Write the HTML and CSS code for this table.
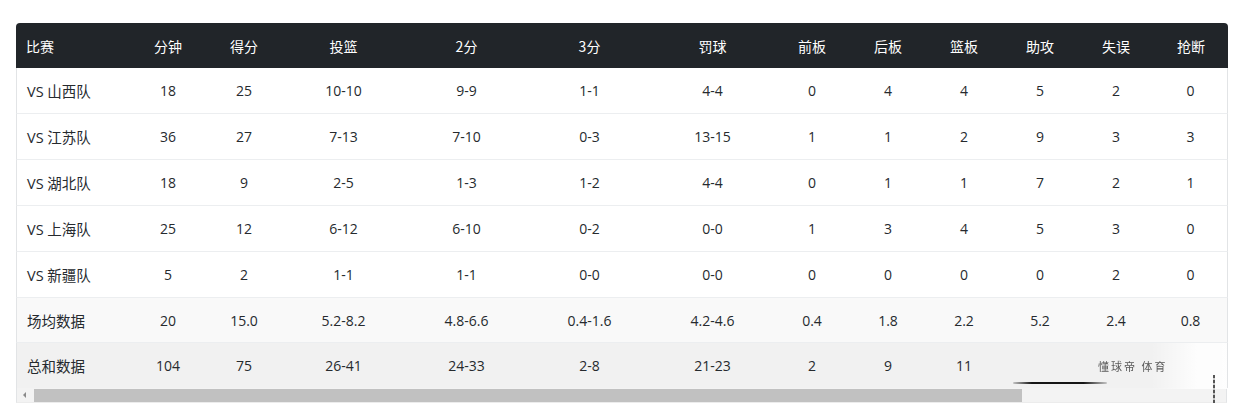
FILE: index.html
```html
<!DOCTYPE html>
<html lang="zh-CN">
<head>
<meta charset="utf-8">
<title>数据</title>
<link rel="stylesheet" href="styles.css">
</head>
<body>
<div class="wrap">
  <table class="stats">
    <colgroup>
      <col class="c-name"><col class="c-s"><col class="c-s"><col class="c-l"><col class="c-l"><col class="c-l"><col class="c-l">
      <col class="c-s"><col class="c-s"><col class="c-s"><col class="c-s"><col class="c-s"><col class="c-e">
    </colgroup>
    <thead>
      <tr>
        <th class="name">比赛</th><th>分钟</th><th>得分</th><th>投篮</th><th>2分</th><th>3分</th><th>罚球</th><th>前板</th><th>后板</th><th>篮板</th><th>助攻</th><th>失误</th><th>抢断</th>
      </tr>
    </thead>
    <tbody>
      <tr><td class="name">VS 山西队</td><td>18</td><td>25</td><td>10-10</td><td>9-9</td><td>1-1</td><td>4-4</td><td>0</td><td>4</td><td>4</td><td>5</td><td>2</td><td>0</td></tr>
      <tr><td class="name">VS 江苏队</td><td>36</td><td>27</td><td>7-13</td><td>7-10</td><td>0-3</td><td>13-15</td><td>1</td><td>1</td><td>2</td><td>9</td><td>3</td><td>3</td></tr>
      <tr><td class="name">VS 湖北队</td><td>18</td><td>9</td><td>2-5</td><td>1-3</td><td>1-2</td><td>4-4</td><td>0</td><td>1</td><td>1</td><td>7</td><td>2</td><td>1</td></tr>
      <tr><td class="name">VS 上海队</td><td>25</td><td>12</td><td>6-12</td><td>6-10</td><td>0-2</td><td>0-0</td><td>1</td><td>3</td><td>4</td><td>5</td><td>3</td><td>0</td></tr>
      <tr><td class="name">VS 新疆队</td><td>5</td><td>2</td><td>1-1</td><td>1-1</td><td>0-0</td><td>0-0</td><td>0</td><td>0</td><td>0</td><td>0</td><td>2</td><td>0</td></tr>
      <tr class="avg"><td class="name">场均数据</td><td>20</td><td>15.0</td><td>5.2-8.2</td><td>4.8-6.6</td><td>0.4-1.6</td><td>4.2-4.6</td><td>0.4</td><td>1.8</td><td>2.2</td><td>5.2</td><td>2.4</td><td>0.8</td></tr>
      <tr class="sum"><td class="name">总和数据</td><td>104</td><td>75</td><td>26-41</td><td>24-33</td><td>2-8</td><td>21-23</td><td>2</td><td>9</td><td>11</td><td></td><td></td><td></td></tr>
    </tbody>
  </table>
  <div class="scrollbar">
    <span class="arrow"></span>
    <div class="thumb"></div>
  </div>
  <div class="wm">
    <div class="wm-fade"></div>
    <span class="wm-text">懂球帝 体育</span>
    <div class="wm-line"></div>
    <div class="wm-mark"></div>
  </div>
</div>
</body>
</html>
```

FILE: styles.css
```css
html, body {
  margin: 0;
  padding: 0;
  background: #ffffff;
}

body {
  font-family: "Open Sans", "Noto Sans CJK SC", sans-serif;
  color: #262a2e;
}

.wrap {
  position: relative;
  margin: 23px 0 0 16px;
  width: 1211px;
}

.stats {
  width: 1211px;
  table-layout: fixed;
  border-collapse: separate;
  border-spacing: 0;
  font-size: 14px;
}

.c-name { width: 114px; }
.c-s { width: 76px; }
.c-l { width: 123px; }
.c-e { width: 74px; }

.stats th {
  background: #212529;
  color: #ffffff;
  font-weight: 400;
  font-size: 14px;
  height: 45px;
  padding: 0;
  text-align: center;
  font-family: "Noto Sans CJK SC", sans-serif;
}

.stats th:first-child { border-top-left-radius: 4px; }
.stats th:last-child { border-top-right-radius: 4px; }

.stats td {
  height: 45px;
  padding: 0;
  text-align: center;
  border-bottom: 1px solid #eceef0;
  background: #ffffff;
}

.stats tr.short td { height: 44px; }

.stats td:first-child { border-left: 1px solid #e2e4e6; }
.stats td:last-child { border-right: 1px solid #e2e4e6; }

.stats .name {
  text-align: left;
  padding-left: 10px;
}

.stats td.name {
  font-size: 14.5px;
}

.stats tr.avg td { background: #f9f9f9; height: 44px; }
.stats tr.sum td { background: #f1f1f1; border-bottom: none; height: 45px; }

.scrollbar {
  position: relative;
  display: flex;
  align-items: center;
  height: 14px;
  background: #f3f3f3;
  border-left: 1px solid #e2e4e6;
  border-right: 1px solid #e2e4e6;
  border-bottom: 1px solid #ececec;
}

.arrow {
  width: 0;
  height: 0;
  margin-left: 6px;
  border-top: 3px solid transparent;
  border-bottom: 3px solid transparent;
  border-right: 3px solid #8a8a8a;
}

.thumb {
  margin-left: 8px;
  width: 988px;
  height: 13px;
  background: #c1c1c1;
}

.wm {
  position: absolute;
  left: 985px;
  top: 300px;
  width: 226px;
  height: 95px;
  pointer-events: none;
}

.wm-fade {
  position: absolute;
  left: 150px;
  top: 20px;
  width: 76px;
  height: 46px;
  background: linear-gradient(90deg, rgba(255,255,255,0), rgba(255,255,255,0.85) 60%, rgba(255,255,255,0.9));
}

.wm-text {
  position: absolute;
  left: 97px;
  top: 35px;
  font-family: "Noto Sans CJK SC", sans-serif;
  font-size: 11px;
  color: #5a5a5a;
  filter: blur(0.7px);
  letter-spacing: 2px;
}

.wm-line {
  position: absolute;
  left: 12px;
  top: 59px;
  width: 94px;
  height: 2px;
  border-radius: 1px;
  background: linear-gradient(90deg, rgba(20,20,20,0.2), #151515 20%, #151515 75%, rgba(20,20,20,0.2));
}

.wm-mark {
  position: absolute;
  left: 212px;
  top: 52px;
  width: 2px;
  height: 36px;
  background: repeating-linear-gradient(180deg, #555 0 3px, rgba(80,80,80,0.3) 3px 5px);
  filter: blur(0.4px);
}
```
